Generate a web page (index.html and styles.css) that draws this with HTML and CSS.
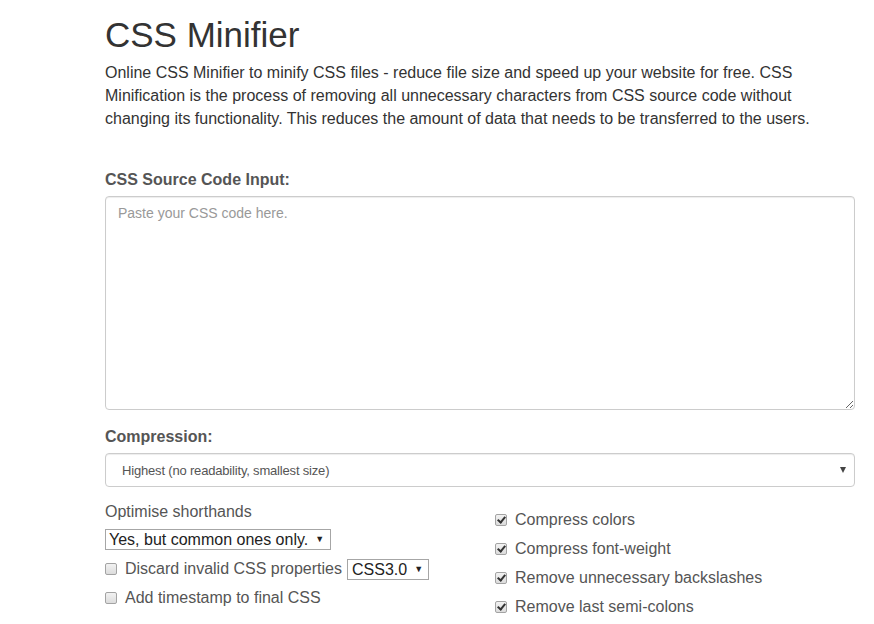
FILE: index.html
```html
<!DOCTYPE html>
<html>
<head>
<meta charset="utf-8">
<link rel="stylesheet" href="styles.css">
</head>
<body>
<div class="container">
  <h1 class="title">CSS Minifier</h1>
  <p class="intro">Online CSS Minifier to minify CSS files - reduce file size and speed up your website for free. CSS Minification is the process of removing all unnecessary characters from CSS source code without changing its functionality. This reduces the amount of data that needs to be transferred to the users.</p>

  <label class="field-label">CSS Source Code Input:</label>
  <textarea class="code-input" placeholder="Paste your CSS code here."></textarea>

  <label class="field-label">Compression:</label>
  <div class="big-select">
    <span>Highest (no readability, smallest size)</span>
    <span class="caret"></span>
  </div>

  <div class="options">
    <div class="col left">
      <div class="opt-title">Optimise shorthands</div>
      <div class="mini-select wide"><span>Yes, but common ones only.</span><span class="tri">▼</span></div>
      <div class="opt-row"><span class="cb"></span><span>Discard invalid CSS properties</span><div class="mini-select small"><span>CSS3.0</span><span class="tri">▼</span></div></div>
      <div class="opt-row"><span class="cb"></span><span>Add timestamp to final CSS</span></div>
    </div>
    <div class="col right">
      <div class="opt-row"><span class="cb on"></span><span>Compress colors</span></div>
      <div class="opt-row"><span class="cb on"></span><span>Compress font-weight</span></div>
      <div class="opt-row"><span class="cb on"></span><span>Remove unnecessary backslashes</span></div>
      <div class="opt-row"><span class="cb on"></span><span>Remove last semi-colons</span></div>
    </div>
  </div>
</div>
</body>
</html>
```

FILE: styles.css
```css
html, body {
  margin: 0;
  padding: 0;
  background: #fff;
}
body {
  font-family: "Liberation Sans", Arial, sans-serif;
  color: #333;
  font-size: 14px;
}
.container {
  padding: 15px 19px 0 105px;
}
.title {
  font-size: 35px;
  font-weight: normal;
  line-height: 40px;
  margin: 0 0 7px 0;
  color: #333;
}
.intro {
  font-size: 16px;
  line-height: 22.8px;
  margin: 0 0 40px 0;
  color: #333;
}
.field-label {
  display: block;
  font-size: 16px;
  font-weight: bold;
  line-height: 20px;
  color: #555;
  margin-bottom: 6px;
}
.code-input {
  display: block;
  box-sizing: border-box;
  width: 100%;
  height: 214px;
  border: 1px solid #ccc;
  border-radius: 4px;
  padding: 6px 12px;
  font-family: "Liberation Sans", Arial, sans-serif;
  font-size: 14px;
  line-height: 20px;
  margin: 0 0 17px 0;
  box-shadow: inset 0 1px 1px rgba(0,0,0,.075);
  resize: vertical;
}
.code-input::placeholder {
  color: #999;
}
.big-select {
  box-sizing: border-box;
  height: 34px;
  border: 1px solid #ccc;
  border-radius: 4px;
  box-shadow: inset 0 1px 1px rgba(0,0,0,.075);
  display: flex;
  align-items: center;
  justify-content: space-between;
  padding: 0 8px 0 16px;
  font-size: 13px;
  letter-spacing: -0.18px;
  color: #555;
}
.caret {
  width: 0;
  height: 0;
  border-left: 3.5px solid transparent;
  border-right: 3.5px solid transparent;
  border-top: 6px solid #444;
}
.options {
  display: flex;
  margin-top: 14px;
  font-size: 16px;
  color: #555;
}
.col.left {
  flex: none;
  width: 390px;
}
.col.right {
  flex: 1;
  padding-top: 8px;
}
.opt-title {
  line-height: 22px;
  margin-bottom: 6px;
}
.mini-select {
  display: inline-flex;
  align-items: center;
  box-sizing: border-box;
  border: 1px solid #a6a6a6;
  height: 21px;
  padding: 0 6px 0 3px;
  color: #222;
  background: #fff;
  line-height: 19px;
  white-space: nowrap;
}
.mini-select .tri {
  font-size: 9px;
  margin-left: 7px;
  color: #222;
}
.mini-select.small {
  margin-left: 5px;
  padding-left: 4px;
  padding-right: 5px;
}
.opt-row {
  display: flex;
  align-items: center;
  height: 22px;
  margin-top: 7px;
  white-space: nowrap;
}
.col.left .mini-select.wide + .opt-row {
  margin-top: 8px;
}
.col.right .opt-row {
  margin-top: 0;
  margin-bottom: 7px;
}
.cb {
  box-sizing: border-box;
  width: 12px;
  height: 12px;
  border: 1px solid #a3a3a3;
  border-radius: 2px;
  background: linear-gradient(#f2f2f2, #dcdcdc);
  margin-right: 8px;
  position: relative;
  flex: none;
}
.cb.on::after {
  content: "";
  position: absolute;
  left: 3px;
  top: 0px;
  width: 3px;
  height: 6px;
  border-right: 2px solid #333;
  border-bottom: 2px solid #333;
  transform: rotate(40deg);
}
```
